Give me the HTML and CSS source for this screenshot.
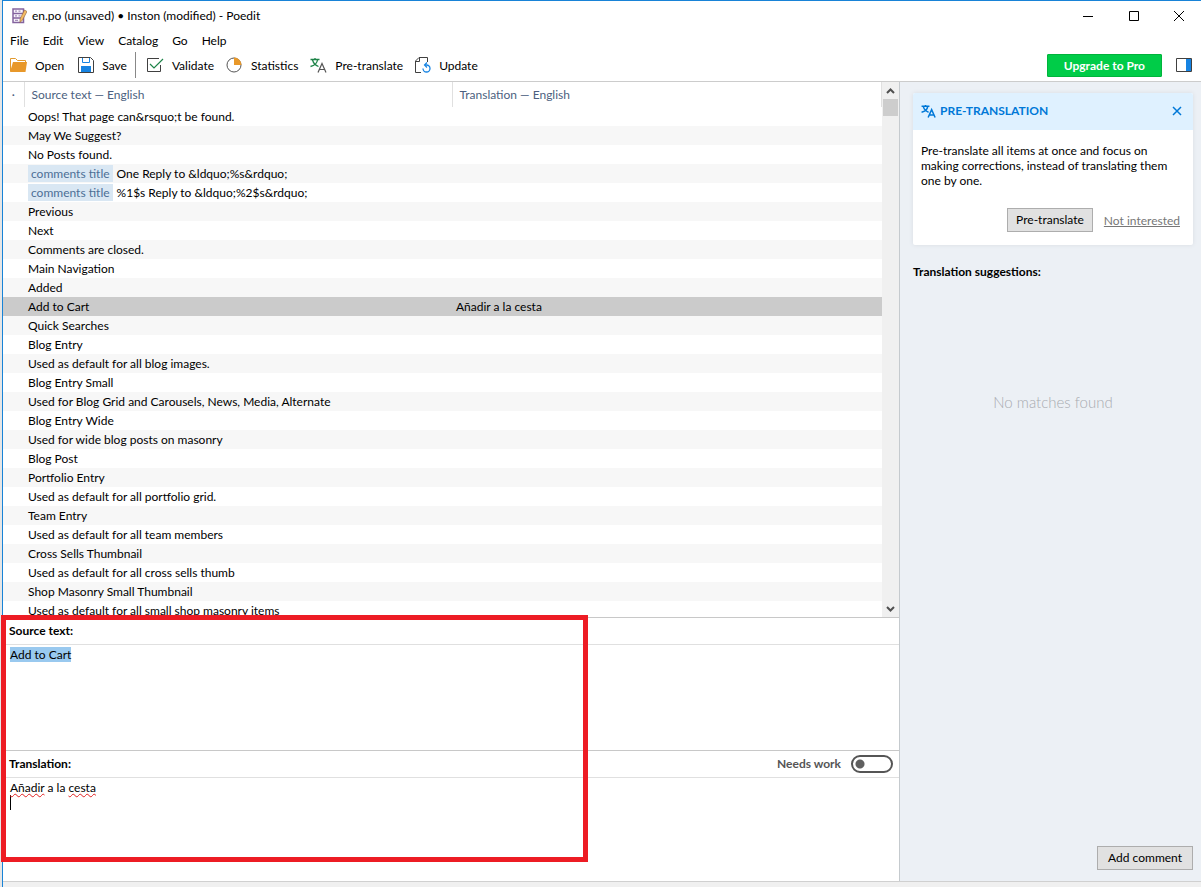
FILE: index.html
```
<!DOCTYPE html>
<html lang="en">
<head>
    <meta charset="utf-8">
    <title>Poedit</title>
    <link rel="stylesheet" href="styles.css">
</head>
<body>

<div class="window">
    <header class="titlebar">
        <svg class="logo" width="16" height="16" viewBox="0 0 16 16" fill="none">
            <path d="M2 1h10.500v13.500H2zM2 5.500h10.500M2 10h10.500" fill="#faf7fc" stroke="#84639f" stroke-width="1.500"/>
            <path d="M4 3.200h2M7.500 3.200h2M4 7.800h2M7.500 7.800h2M4 12.300h3" stroke="#a58dba" stroke-width="1.200"/>
            <path d="M13.500 2L9 11v3.500l2.500-2.500L16 3.500z" fill="#f5bb62" stroke="#8c6239" stroke-width=".6"/>
        </svg>
        <h1>en.po (unsaved) • Inston (modified) - Poedit</h1>
        <div class="controls">
            <button aria-label="Minimize"><svg width="12" height="12"><path d="M1 6.500h10" stroke="#000"/></svg></button>
            <button aria-label="Maximize"><svg width="12" height="12"><path d="M1.500 1.500h9v9h-9z" fill="none" stroke="#000"/></svg></button>
            <button aria-label="Close"><svg width="12" height="12"><path d="M1 1l10 10M11 1L1 11" stroke="#000"/></svg></button>
        </div>
    </header>

    <nav class="menu">
        <a href="#">File</a>
        <a href="#">Edit</a>
        <a href="#">View</a>
        <a href="#">Catalog</a>
        <a href="#">Go</a>
        <a href="#">Help</a>
    </nav>

    <div class="toolbar">
        <button class="tool">
            <svg width="18" height="16" viewBox="0 0 18 16"><path d="M1.500 14V1.500h5l2 2h8V6" fill="none" stroke="#e29a2e"/><path d="M1 15L4 5h14l-1.500 10H1z" fill="#e8982a"/></svg>
            Open
        </button>
        <button class="tool">
            <svg width="16" height="16" viewBox="0 0 16 16"><path d="M.5.5h12l3 3v12H.5z" fill="#fff" stroke="#404040"/><path d="M4.500 1v4.500h7V1" fill="none" stroke="#1683e2"/><path d="M3 9h10v6H3z" fill="#1683e2"/></svg>
            Save
        </button>
        <span class="separator"></span>
        <button class="tool">
            <svg width="18" height="16" viewBox="0 0 18 16" fill="none"><path d="M13 1.500H1.500v13h13V8" stroke="#404040"/><path d="M4 7l4 4 9-9" stroke="#1e8449" stroke-width="1.200"/></svg>
            Validate
        </button>
        <button class="tool">
            <svg width="17" height="16" viewBox="0 0 17 16"><circle cx="8" cy="8" r="7" fill="#fff" stroke="#555"/><path d="M8 8V.5A7.500 7.500 0 0 1 15.500 8z" fill="#e8982a"/></svg>
            Statistics
        </button>
        <button class="tool">
            <svg width="17" height="16" viewBox="0 0 17 16" fill="none"><path d="M.5 2.500h9M5 1v1.500M2.500 3c1 3.500 3.500 5.500 6 6.500M7.500 3c-.5 3.500-3 5.500-7 6.500" stroke="#1e8449" stroke-width="1.300"/><path d="M8 15.500L12 6.500l4 9M9.500 12.500h5" stroke="#555" stroke-width="1.200"/></svg>
            Pre-translate
        </button>
        <button class="tool">
            <svg width="16" height="16" viewBox="0 0 16 16" fill="none"><path d="M6 15.500H.5V4L4 .5h8.500V5M4.500 1v3.500H1" stroke="#404040"/><path d="M10 8h1.500a3.500 3.500 0 1 1-3.500 3.500" stroke="#1683e2" stroke-width="1.300"/><path d="M12 5.500L9.500 8l2.500 2.500" stroke="#1683e2" stroke-width="1.200"/></svg>
            Update
        </button>
        <button class="upgrade">Upgrade to Pro</button>
        <button class="sidebar-toggle" aria-label="Toggle sidebar"><svg width="16" height="14"><path d="M.5.5h15v13H.5z" fill="#fff" stroke="#404040"/><path d="M10 1h5v12h-5z" fill="#1683e2"/></svg></button>
    </div>

    <main class="content">
        <section class="editor">
            <div class="list">
                <table class="strings">
                    <thead>
                        <tr><th class="mark">·</th><th class="source">Source text — English</th><th>Translation — English</th></tr>
                    </thead>
                    <tbody>
                        <tr><td></td><td>Oops! That page can&amp;rsquo;t be found.</td><td></td></tr>
                        <tr><td></td><td>May We Suggest?</td><td></td></tr>
                        <tr><td></td><td>No Posts found.</td><td></td></tr>
                        <tr><td></td><td><span class="context">comments title</span>One Reply to &amp;ldquo;%s&amp;rdquo;</td><td></td></tr>
                        <tr><td></td><td><span class="context">comments title</span>%1$s Reply to &amp;ldquo;%2$s&amp;rdquo;</td><td></td></tr>
                        <tr><td></td><td>Previous</td><td></td></tr>
                        <tr><td></td><td>Next</td><td></td></tr>
                        <tr><td></td><td>Comments are closed.</td><td></td></tr>
                        <tr><td></td><td>Main Navigation</td><td></td></tr>
                        <tr><td></td><td>Added</td><td></td></tr>
                        <tr class="selected"><td></td><td>Add to Cart</td><td>Añadir a la cesta</td></tr>
                        <tr><td></td><td>Quick Searches</td><td></td></tr>
                        <tr><td></td><td>Blog Entry</td><td></td></tr>
                        <tr><td></td><td>Used as default for all blog images.</td><td></td></tr>
                        <tr><td></td><td>Blog Entry Small</td><td></td></tr>
                        <tr><td></td><td>Used for Blog Grid and Carousels, News, Media, Alternate</td><td></td></tr>
                        <tr><td></td><td>Blog Entry Wide</td><td></td></tr>
                        <tr><td></td><td>Used for wide blog posts on masonry</td><td></td></tr>
                        <tr><td></td><td>Blog Post</td><td></td></tr>
                        <tr><td></td><td>Portfolio Entry</td><td></td></tr>
                        <tr><td></td><td>Used as default for all portfolio grid.</td><td></td></tr>
                        <tr><td></td><td>Team Entry</td><td></td></tr>
                        <tr><td></td><td>Used as default for all team members</td><td></td></tr>
                        <tr><td></td><td>Cross Sells Thumbnail</td><td></td></tr>
                        <tr><td></td><td>Used as default for all cross sells thumb</td><td></td></tr>
                        <tr><td></td><td>Shop Masonry Small Thumbnail</td><td></td></tr>
                        <tr><td></td><td>Used as default for all small shop masonry items</td><td></td></tr>
                    </tbody>
                </table>
                <div class="scrollbar">
                    <svg width="9" height="6"><path d="M1 5l3.500-3.500L8 5" fill="none" stroke="#505050" stroke-width="2"/></svg>
                    <span class="thumb"></span>
                    <svg width="9" height="6"><path d="M1 1l3.500 3.500L8 1" fill="none" stroke="#505050" stroke-width="2"/></svg>
                </div>
            </div>

            <div class="pane">
                <div class="pane-head"><h2>Source text:</h2></div>
                <div class="text"><mark>Add to Cart</mark></div>
            </div>
            <div class="pane">
                <div class="pane-head">
                    <h2>Translation:</h2>
                    <label class="needs-work">Needs work <input type="checkbox" class="switch"></label>
                </div>
                <div class="text" contenteditable="true" role="textbox" aria-label="Translation" spellcheck="false"><span class="misspelled">Añadir</span> a la <span class="misspelled">cesta</span><br><span class="caret"></span></div>
            </div>
            <div class="highlight"></div>
        </section>

        <aside class="sidebar">
            <div class="card">
                <div class="card-head">
                    <svg width="16" height="14" viewBox="0 0 18 16" fill="none" stroke="#0078d7" stroke-width="1.700"><path d="M.5 2.500h9M5 1v1.500M2.500 3c1 3.500 3.500 5.500 6 6.500M7.500 3c-.5 3.500-3 5.500-7 6.500M8 15.500L12 6.500l4 9M9.500 12.500h5"/></svg>
                    <h2>PRE-TRANSLATION</h2>
                    <button class="close" aria-label="Close"><svg width="10" height="10"><path d="M1 1l8 8M9 1L1 9" stroke="#0078d7" stroke-width="1.500"/></svg></button>
                </div>
                <p>Pre-translate all items at once and focus on making corrections, instead of translating them one by one.</p>
                <div class="card-actions">
                    <button class="button">Pre-translate</button>
                    <a href="#">Not interested</a>
                </div>
            </div>
            <h3>Translation suggestions:</h3>
            <p class="empty">No matches found</p>
            <button class="button add-comment">Add comment</button>
        </aside>
    </main>
    <footer class="statusbar"></footer>
</div>

</body>
</html>
```
FILE: styles.css
```
* {
    box-sizing: border-box;
}

body {
    margin: 0;
    padding-left: 2px;
    background-color: #e6e6e6;
    font-family: Lato, sans-serif;
    font-size: 12px;
    line-height: 15px;
    color: #000;
}

button {
    font: inherit;
    color: inherit;
    border: none;
    background: none;
    padding: 0;
}

h1, h2, h3, p {
    margin: 0;
    font-size: 12px;
}

svg {
    display: block;
    flex: none;
}

.window {
    display: flex;
    flex-direction: column;
    height: 100vh;
    border-top: 1px solid #1883d7;
    border-left: 1px solid #1883d7;
    background-color: #fff;
}

.titlebar {
    display: flex;
    align-items: center;
    height: 29px;
    padding-left: 8px;
}

.titlebar h1 {
    margin-left: 5px;
    font-weight: normal;
}

.controls {
    display: flex;
    margin-left: auto;
}

.controls button {
    display: flex;
    justify-content: center;
    align-items: center;
    width: 46px;
    height: 28px;
}

.controls button:last-child {
    width: 44px;
}

.menu {
    display: flex;
    gap: 14px;
    height: 22px;
    padding-left: 7px;
    line-height: 22px;
}

.menu a {
    color: #000;
    text-decoration: none;
}

.toolbar {
    display: flex;
    align-items: center;
    height: 30px;
    padding: 0 9px 3px 6px;
    border-bottom: 1px solid #ccc;
}

.tool {
    display: flex;
    align-items: center;
    gap: 8px;
    margin-right: 14px;
}

.separator {
    width: 1px;
    height: 26px;
    margin: 0 10px 0 -6px;
    background-color: #888;
}

.separator ~ .tool {
    margin-right: 12px;
}

.upgrade {
    height: 23px;
    margin-left: auto;
    padding: 0 16px;
    border: 1px solid #00b43c;
    border-radius: 1px;
    background-color: #00cc48;
    color: #fff;
    font-weight: bold;
}

.sidebar-toggle {
    margin-left: 14px;
}

.content {
    display: flex;
    flex: 1;
    min-height: 0;
}

.editor {
    position: relative;
    display: flex;
    flex-direction: column;
    flex: 1;
    border-right: 1px solid #c5cace;
}

.list {
    display: flex;
    flex: 1;
    min-height: 0;
    overflow: hidden;
}

.strings {
    flex: 1;
    align-self: flex-start;
    border-collapse: collapse;
    table-layout: fixed;
}

.strings th {
    height: 25px;
    padding: 0 7px;
    border-right: 1px solid #e0e0e0;
    color: #4c5f80;
    font-weight: normal;
    text-align: left;
}

.strings .mark {
    width: 21px;
    padding: 0;
    text-align: center;
}

.strings .source {
    width: 428px;
}

.strings td {
    height: 19px;
    padding: 0 4px;
    white-space: nowrap;
}

.strings tbody tr:nth-child(even) {
    background-color: #f7f7f7;
}

.strings .selected {
    background-color: #cbcbcb;
}

.context {
    display: inline-block;
    margin-right: 4px;
    padding: 1px 3px;
    background-color: #d9e7f3;
    color: #4c6f96;
}

.scrollbar {
    display: flex;
    flex-direction: column;
    align-items: center;
    width: 17px;
    padding: 6px 0 5px;
    background-color: #f0f0f0;
}

.thumb {
    width: 15px;
    height: 17px;
    margin: 5px 0 auto;
    background-color: #cdcdcd;
}

.pane {
    height: 133px;
    border-top: 1px solid #c8c8c8;
}

.pane + .pane {
    height: 131px;
}

.pane-head {
    display: flex;
    justify-content: space-between;
    align-items: center;
    height: 27px;
    padding: 0 6px 1px;
    border-bottom: 1px solid #e0e0e0;
}

.text {
    padding: 2px 7px;
    outline: none;
}

.text mark {
    background-color: #99c9ef;
}

.misspelled {
    text-decoration: underline wavy #e02020 1px;
    text-decoration-skip-ink: none;
    text-underline-offset: 1px;
}

.caret {
    display: block;
    width: 1px;
    height: 15px;
    background-color: #000;
}

.needs-work {
    display: flex;
    align-items: center;
    gap: 10px;
    color: #555;
    font-weight: bold;
}

.switch {
    appearance: none;
    width: 42px;
    height: 18px;
    margin: 0;
    border: 2px solid #555;
    border-radius: 9px;
    background: radial-gradient(circle at 7px 7px, #606060 4px, #fff 5px);
}

/* red frame over both text panes */
.highlight {
    position: absolute;
    left: -2px;
    bottom: 19px;
    width: 587px;
    height: 247px;
    border: 5px solid #ed1c24;
    pointer-events: none;
}

.sidebar {
    display: flex;
    flex-direction: column;
    width: 301px;
    padding: 11px 8px 11px 13px;
    background-color: #ecf0f5;
}

.card {
    border-radius: 2px;
    background-color: #fff;
    box-shadow: 0 0 4px #d8dce2;
}

.card-head {
    display: flex;
    align-items: center;
    height: 37px;
    padding: 0 11px 2px 8px;
    border-radius: 2px 2px 0 0;
    background-color: #dff1ff;
    color: #0078d7;
}

.card-head h2 {
    margin-left: 3px;
}

.close {
    margin-left: auto;
}

.card p {
    padding: 13px 12px 20px 8px;
}

.card-actions {
    display: flex;
    justify-content: flex-end;
    align-items: center;
    gap: 11px;
    padding: 0 13px 13px;
}

.card-actions a {
    color: #777;
}

.button {
    height: 24px;
    padding: 0 8px 1px;
    border: 1px solid #adadad;
    background-color: #e1e1e1;
}

.sidebar h3 {
    margin-top: 19px;
}

.empty {
    margin-top: 113px;
    color: #a8abb0;
    font-size: 15px;
    font-weight: 300;
    line-height: 20px;
    text-align: center;
}

.add-comment {
    margin-top: auto;
    align-self: flex-end;
    padding: 0 10px 1px;
}

.statusbar {
    height: 6px;
    border-top: 1px solid #d0d0d0;
    background-color: #f0f0f0;
}
```
